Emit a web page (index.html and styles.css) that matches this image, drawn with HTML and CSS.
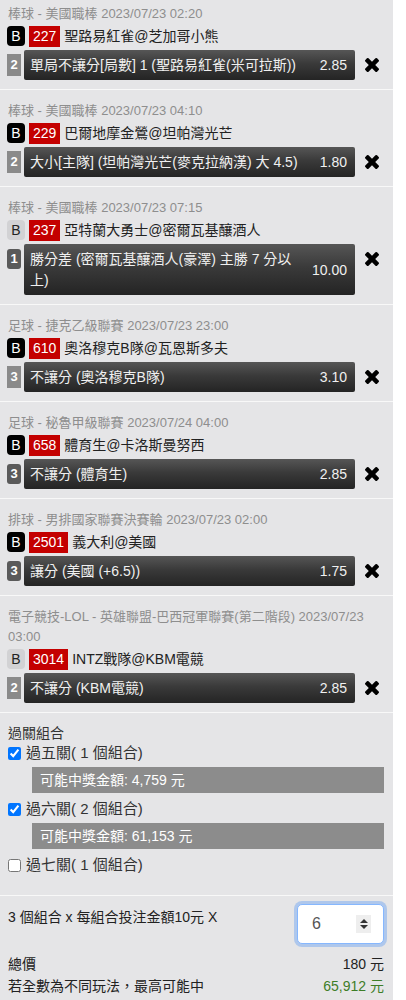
FILE: index.html
```html
<!DOCTYPE html>
<html lang="zh-Hant">
<head>
<meta charset="utf-8">
<title>投注單</title>
<link rel="stylesheet" href="styles.css">
</head>
<body>
<div class="panel">

  <div class="bet first">
    <div class="meta">棒球 - 美國職棒 2023/07/23 02:20</div>
    <div class="match"><span class="tag">B</span><span class="num">227</span><span class="teams">聖路易紅雀@芝加哥小熊</span></div>
    <div class="pick">
      <span class="seq">2</span>
      <div class="bar"><span class="desc">單局不讓分[局數] 1 (聖路易紅雀(米可拉斯))</span><span class="odds">2.85</span></div>
      <span class="del"><svg viewBox="302 366 1188 1188" width="14" height="14"><path d="M1490 1322q0 40-28 68l-136 136q-28 28-68 28t-68-28l-294-294-294 294q-28 28-68 28t-68-28l-136-136q-28-28-28-68t28-68l294-294-294-294q-28-28-28-68t28-68l136-136q28-28 68-28t68 28l294 294 294-294q28-28 68-28t68 28l136 136q28 28 28 68t-28 68l-294 294 294 294q28 28 28 68z"/></svg></span>
    </div>
  </div>

  <div class="bet">
    <div class="meta">棒球 - 美國職棒 2023/07/23 04:10</div>
    <div class="match"><span class="tag">B</span><span class="num">229</span><span class="teams">巴爾地摩金鶯@坦帕灣光芒</span></div>
    <div class="pick">
      <span class="seq">2</span>
      <div class="bar"><span class="desc">大小[主隊] (坦帕灣光芒(麥克拉納漢) 大 4.5)</span><span class="odds">1.80</span></div>
      <span class="del"><svg viewBox="302 366 1188 1188" width="14" height="14"><path d="M1490 1322q0 40-28 68l-136 136q-28 28-68 28t-68-28l-294-294-294 294q-28 28-68 28t-68-28l-136-136q-28-28-28-68t28-68l294-294-294-294q-28-28-28-68t28-68l136-136q28-28 68-28t68 28l294 294 294-294q28-28 68-28t68 28l136 136q28 28 28 68t-28 68l-294 294 294 294q28 28 28 68z"/></svg></span>
    </div>
  </div>

  <div class="bet">
    <div class="meta">棒球 - 美國職棒 2023/07/23 07:15</div>
    <div class="match"><span class="tag tag-light">B</span><span class="num">237</span><span class="teams">亞特蘭大勇士@密爾瓦基釀酒人</span></div>
    <div class="pick">
      <span class="seq seq-dark">1</span>
      <div class="bar"><span class="desc">勝分差 (密爾瓦基釀酒人(豪澤) 主勝 7 分以上)</span><span class="odds">10.00</span></div>
      <span class="del"><svg viewBox="302 366 1188 1188" width="14" height="14"><path d="M1490 1322q0 40-28 68l-136 136q-28 28-68 28t-68-28l-294-294-294 294q-28 28-68 28t-68-28l-136-136q-28-28-28-68t28-68l294-294-294-294q-28-28-28-68t28-68l136-136q28-28 68-28t68 28l294 294 294-294q28-28 68-28t68 28l136 136q28 28 28 68t-28 68l-294 294 294 294q28 28 28 68z"/></svg></span>
    </div>
  </div>

  <div class="bet">
    <div class="meta">足球 - 捷克乙級聯賽 2023/07/23 23:00</div>
    <div class="match"><span class="tag">B</span><span class="num">610</span><span class="teams">奧洛穆克B隊@瓦恩斯多夫</span></div>
    <div class="pick">
      <span class="seq">3</span>
      <div class="bar"><span class="desc">不讓分 (奧洛穆克B隊)</span><span class="odds">3.10</span></div>
      <span class="del"><svg viewBox="302 366 1188 1188" width="14" height="14"><path d="M1490 1322q0 40-28 68l-136 136q-28 28-68 28t-68-28l-294-294-294 294q-28 28-68 28t-68-28l-136-136q-28-28-28-68t28-68l294-294-294-294q-28-28-28-68t28-68l136-136q28-28 68-28t68 28l294 294 294-294q28-28 68-28t68 28l136 136q28 28 28 68t-28 68l-294 294 294 294q28 28 28 68z"/></svg></span>
    </div>
  </div>

  <div class="bet">
    <div class="meta">足球 - 秘魯甲級聯賽 2023/07/24 04:00</div>
    <div class="match"><span class="tag">B</span><span class="num">658</span><span class="teams">體育生@卡洛斯曼努西</span></div>
    <div class="pick">
      <span class="seq seq-dark">3</span>
      <div class="bar"><span class="desc">不讓分 (體育生)</span><span class="odds">2.85</span></div>
      <span class="del"><svg viewBox="302 366 1188 1188" width="14" height="14"><path d="M1490 1322q0 40-28 68l-136 136q-28 28-68 28t-68-28l-294-294-294 294q-28 28-68 28t-68-28l-136-136q-28-28-28-68t28-68l294-294-294-294q-28-28-28-68t28-68l136-136q28-28 68-28t68 28l294 294 294-294q28-28 68-28t68 28l136 136q28 28 28 68t-28 68l-294 294 294 294q28 28 28 68z"/></svg></span>
    </div>
  </div>

  <div class="bet">
    <div class="meta">排球 - 男排國家聯賽決賽輪 2023/07/23 02:00</div>
    <div class="match"><span class="tag">B</span><span class="num">2501</span><span class="teams">義大利@美國</span></div>
    <div class="pick">
      <span class="seq seq-dark">3</span>
      <div class="bar"><span class="desc">讓分 (美國 (+6.5))</span><span class="odds">1.75</span></div>
      <span class="del"><svg viewBox="302 366 1188 1188" width="14" height="14"><path d="M1490 1322q0 40-28 68l-136 136q-28 28-68 28t-68-28l-294-294-294 294q-28 28-68 28t-68-28l-136-136q-28-28-28-68t28-68l294-294-294-294q-28-28-28-68t28-68l136-136q28-28 68-28t68 28l294 294 294-294q28-28 68-28t68 28l136 136q28 28 28 68t-28 68l-294 294 294 294q28 28 28 68z"/></svg></span>
    </div>
  </div>

  <div class="bet">
    <div class="meta">電子競技-LOL - 英雄聯盟-巴西冠軍聯賽(第二階段) 2023/07/23 03:00</div>
    <div class="match"><span class="tag tag-light">B</span><span class="num">3014</span><span class="teams">INTZ戰隊@KBM電競</span></div>
    <div class="pick">
      <span class="seq">2</span>
      <div class="bar"><span class="desc">不讓分 (KBM電競)</span><span class="odds">2.85</span></div>
      <span class="del"><svg viewBox="302 366 1188 1188" width="14" height="14"><path d="M1490 1322q0 40-28 68l-136 136q-28 28-68 28t-68-28l-294-294-294 294q-28 28-68 28t-68-28l-136-136q-28-28-28-68t28-68l294-294-294-294q-28-28-28-68t28-68l136-136q28-28 68-28t68 28l294 294 294-294q28-28 68-28t68 28l136 136q28 28 28 68t-28 68l-294 294 294 294q28 28 28 68z"/></svg></span>
    </div>
  </div>

  <div class="combos">
    <div class="combos-title">過關組合</div>
    <label class="combo"><input type="checkbox" checked><span>過五關( 1 個組合)</span></label>
    <div class="prize">可能中獎金額: 4,759 元</div>
    <label class="combo"><input type="checkbox" checked><span>過六關( 2 個組合)</span></label>
    <div class="prize">可能中獎金額: 61,153 元</div>
    <label class="combo"><input type="checkbox"><span>過七關( 1 個組合)</span></label>
  </div>

  <div class="footer">
    <div class="stake-row">
      <span class="stake-label">3 個組合 x 每組合投注金額10元 X</span>
      <div class="stepper">
        <input class="stepper-input" type="text" value="6" readonly>
        <span class="spin"><svg viewBox="0 0 10 12" width="10" height="12"><path d="M1 5 L5 1 L9 5 Z M1 7 L5 11 L9 7 Z"/></svg></span>
      </div>
    </div>
    <div class="sum-row"><span>總價</span><span>180 元</span></div>
    <div class="sum-row"><span>若全數為不同玩法，最高可能中</span><span class="green">65,912 元</span></div>
  </div>

</div>
</body>
</html>
```

FILE: styles.css
```css
* { box-sizing: border-box; }

html, body {
  margin: 0;
  padding: 0;
  background: #ffffff;
}

body {
  font-family: "Liberation Sans", "Noto Sans CJK TC", sans-serif;
  font-size: 14px;
  color: #222;
}

.panel {
  width: 393px;
  background: #e5e5e7;
}

.bet {
  padding: 11px 0 9px 7px;
  border-bottom: 1px solid #f8f8f8;
}

.bet.first {
  padding-top: 4px;
}

.meta {
  font-size: 13px;
  line-height: 20px;
  color: #8e8e8e;
  padding-left: 1px;
  padding-right: 8px;
}

.match {
  display: flex;
  align-items: center;
  gap: 4px;
  height: 22px;
  margin-top: 1px;
}

.tag {
  width: 18px;
  height: 20px;
  border-radius: 4px;
  background: #000;
  color: #fff;
  font-size: 14px;
  line-height: 20px;
  text-align: center;
}

.tag-light {
  background: #d2d2d4;
  color: #222;
}

.num {
  height: 21px;
  padding: 0 4px;
  background: #c40000;
  color: #fff;
  font-size: 14px;
  line-height: 21px;
}

.teams {
  font-size: 14px;
  line-height: 20px;
  color: #222;
}

.pick {
  display: flex;
  align-items: flex-start;
  margin-top: 3px;
}

.seq {
  width: 14px;
  height: 22px;
  margin-top: 4px;
  background: #8a8a8a;
  color: #fff;
  font-size: 13px;
  font-weight: bold;
  line-height: 22px;
  text-align: center;
}

.seq-dark {
  height: 20px;
  margin-top: 5px;
  line-height: 20px;
  background: #5a5a5a;
  border-radius: 3px;
}

.bar {
  flex: 1;
  margin-left: 3px;
  display: flex;
  align-items: center;
  gap: 10px;
  min-height: 30px;
  padding: 5px 8px 4px 6px;
  border-radius: 2px;
  background: linear-gradient(to bottom, #565656 0%, #3a3a3a 45%, #242424 100%);
  color: #f0f0f0;
  font-size: 14px;
  line-height: 21px;
}

.desc {
  flex: 1;
}

.odds {
  white-space: nowrap;
}

.del {
  width: 38px;
  padding-left: 10px;
  padding-top: 8px;
  display: flex;
}

.del svg {
  fill: #000;
  display: block;
}

.combos {
  padding: 10px 9px 20px 8px;
  border-bottom: 1px solid #f8f8f8;
}

.combos-title {
  font-size: 14px;
  line-height: 20px;
  color: #333;
}

.combo {
  display: flex;
  align-items: center;
  height: 20px;
  font-size: 15px;
  line-height: 20px;
  color: #333;
  margin-top: 6px;
}

.combos-title + .combo {
  margin-top: 0;
}

.combo input {
  width: 13px;
  height: 13px;
  margin: 0 5px 0 0;
}

.prize {
  margin: 4px 0 0 24px;
  height: 26px;
  padding-left: 8px;
  background: #8c8c8c;
  color: #fff;
  font-size: 14px;
  line-height: 26px;
}

.footer {
  padding: 8px 9px 6px 8px;
}

.stake-row {
  display: flex;
  justify-content: space-between;
  align-items: flex-start;
}

.stake-label {
  font-size: 14px;
  line-height: 20px;
  color: #222;
  padding-top: 3px;
}

.stepper {
  width: 87px;
  height: 40px;
  display: flex;
  align-items: center;
  background: #fff;
  border: 1px solid #86b7fe;
  border-radius: 5px;
  box-shadow: 0 0 0 3px rgba(13, 110, 253, 0.25);
  padding: 0 12px 0 14px;
}

.stepper-input {
  flex: 1;
  min-width: 0;
  border: 0;
  outline: 0;
  padding: 0;
  background: transparent;
  font-family: "Liberation Sans", sans-serif;
  font-size: 16px;
  color: #555;
}

.spin {
  width: 15px;
  height: 18px;
  background: #eeeeee;
  display: flex;
  align-items: center;
  justify-content: center;
}

.spin svg {
  fill: #333;
  display: block;
}

.sum-row {
  display: flex;
  justify-content: space-between;
  font-size: 14px;
  line-height: 22px;
  color: #222;
}

.stake-row + .sum-row {
  margin-top: 9px;
}

.green {
  color: #3e7d27;
}
```
